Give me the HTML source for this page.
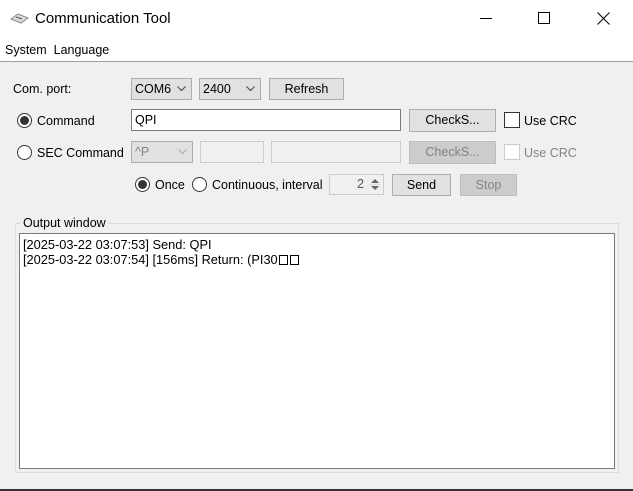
<!DOCTYPE html><html><head><style>
*{margin:0;padding:0;box-sizing:border-box}
body{width:633px;height:491px;background:#f0f0f0;font-family:"Liberation Sans",sans-serif;font-size:12px;color:#000;position:relative;overflow:hidden}
.a{position:absolute}
.btn{position:absolute;background:#e1e1e1;border:1px solid #adadad;text-align:center;font-size:12.5px}
.dis{background:#cccccc;border-color:#bfbfbf;color:#838383}
.combo{position:absolute;background:#e1e1e1;border:1px solid #adadad;font-size:12.5px;padding-left:3px}
.combo svg{position:absolute;right:5px;top:7px}
.tf{position:absolute;background:#fff;border:1px solid #7a7a7a;font-size:12.5px;padding-left:3px}
.rad{position:absolute;width:15px;height:15px;border:1px solid #333;border-radius:50%;background:#fff}
.rad.on::after{content:"";position:absolute;left:2px;top:2px;width:9px;height:9px;border-radius:50%;background:#333}
.lbl{position:absolute;font-size:12.5px}
.bx{display:inline-block;width:9px;height:10px;border:1px solid #000;margin-left:1px;vertical-align:-1px}
</style></head><body>
<div class="a" style="left:0;top:0;width:633px;height:61px;background:#fff"></div>
<div class="a" style="left:0;top:61px;width:633px;height:1px;background:#a0a0a0"></div>
<svg class="a" style="left:10px;top:12px" width="20" height="12"><path d="M1 7 L8 2 L18 6 L11 11 Z" fill="#ddd" stroke="#888"/><path d="M6 5 L12 7" stroke="#555"/></svg>
<div class="a" style="left:35px;top:10px;font-size:15px">Communication Tool</div>
<div class="a" style="left:480px;top:18px;width:12px;height:1px;background:#000"></div>
<div class="a" style="left:538px;top:12px;width:12px;height:12px;border:1px solid #000"></div>
<svg class="a" style="left:597px;top:12px" width="13" height="13"><path d="M0.5 0.5 L12.5 12.5 M12.5 0.5 L0.5 12.5" stroke="#000"/></svg>
<div class="a" style="left:5px;top:43px;font-size:12.5px">System&nbsp; Language</div>

<div class="lbl" style="left:13px;top:82px">Com. port:</div>
<div class="combo" style="left:131px;top:78px;width:61px;height:22px;line-height:20px">COM6<svg width="9" height="6"><path d="M0.5 0.5 L4.5 4.5 L8.5 0.5" fill="none" stroke="#444"/></svg></div>
<div class="combo" style="left:199px;top:78px;width:62px;height:22px;line-height:20px">2400<svg width="9" height="6"><path d="M0.5 0.5 L4.5 4.5 L8.5 0.5" fill="none" stroke="#444"/></svg></div>
<div class="btn" style="left:269px;top:78px;width:75px;height:22px;line-height:20px">Refresh</div>

<div class="rad on" style="left:17px;top:113px"></div>
<div class="lbl" style="left:37px;top:114px">Command</div>
<div class="tf" style="left:131px;top:109px;width:270px;height:22px;line-height:20px">QPI</div>
<div class="btn" style="left:409px;top:109px;width:87px;height:23px;line-height:21px">CheckS...</div>
<div class="a" style="left:504px;top:112px;width:16px;height:16px;border:1px solid #333;background:#fff"></div>
<div class="lbl" style="left:524px;top:114px">Use CRC</div>

<div class="rad" style="left:17px;top:145px"></div>
<div class="lbl" style="left:37px;top:146px">SEC Command</div>
<div class="combo dis" style="left:131px;top:141px;width:62px;height:22px;line-height:20px">^P<svg width="9" height="6"><path d="M0.5 0.5 L4.5 4.5 L8.5 0.5" fill="none" stroke="#aaa"/></svg></div>
<div class="a" style="left:200px;top:141px;width:64px;height:22px;border:1px solid #ccc;background:#f0f0f0"></div>
<div class="a" style="left:271px;top:141px;width:130px;height:22px;border:1px solid #ccc;background:#f0f0f0"></div>
<div class="btn dis" style="left:409px;top:141px;width:87px;height:23px;line-height:21px">CheckS...</div>
<div class="a" style="left:504px;top:144px;width:16px;height:16px;border:1px solid #ccc;background:#fff"></div>
<div class="lbl" style="left:524px;top:146px;color:#838383">Use CRC</div>

<div class="rad on" style="left:135px;top:177px"></div>
<div class="lbl" style="left:155px;top:178px">Once</div>
<div class="rad" style="left:192px;top:177px"></div>
<div class="lbl" style="left:212px;top:178px">Continuous, interval</div>
<div class="a" style="left:329px;top:174px;width:55px;height:21px;border:1px solid #ccc;background:#f0f0f0;font-size:12.5px;line-height:19px;padding-right:19px;text-align:right;color:#555">2</div>
<svg class="a" style="left:368px;top:176px" width="14" height="17"><path d="M3 7 L7 3 L11 7 Z M3 10 L7 14 L11 10 Z" fill="#666"/><path d="M1 8.5 H13" stroke="#ddd"/></svg>
<div class="btn" style="left:392px;top:174px;width:59px;height:22px;line-height:20px">Send</div>
<div class="btn dis" style="left:460px;top:174px;width:57px;height:22px;line-height:20px">Stop</div>

<div class="a" style="left:15px;top:223px;width:604px;height:250px;border:1px solid #dcdcdc"></div>
<div class="a" style="left:21px;top:216px;background:#f0f0f0;padding:0 2px;font-size:12.5px">Output window</div>
<div class="a" style="left:19px;top:233px;width:596px;height:236px;border:1px solid #7a7a7a;background:#fff;font-size:12.8px;line-height:15px;padding:3px 0 0 3px">[2025-03-22 03:07:53] Send: QPI<br>[2025-03-22 03:07:54] [156ms] Return: (PI30<span class="bx"></span><span class="bx" style="margin-left:2px"></span></div>
<div class="a" style="left:0;top:489px;width:633px;height:2px;background:#333"></div>
</body></html>
